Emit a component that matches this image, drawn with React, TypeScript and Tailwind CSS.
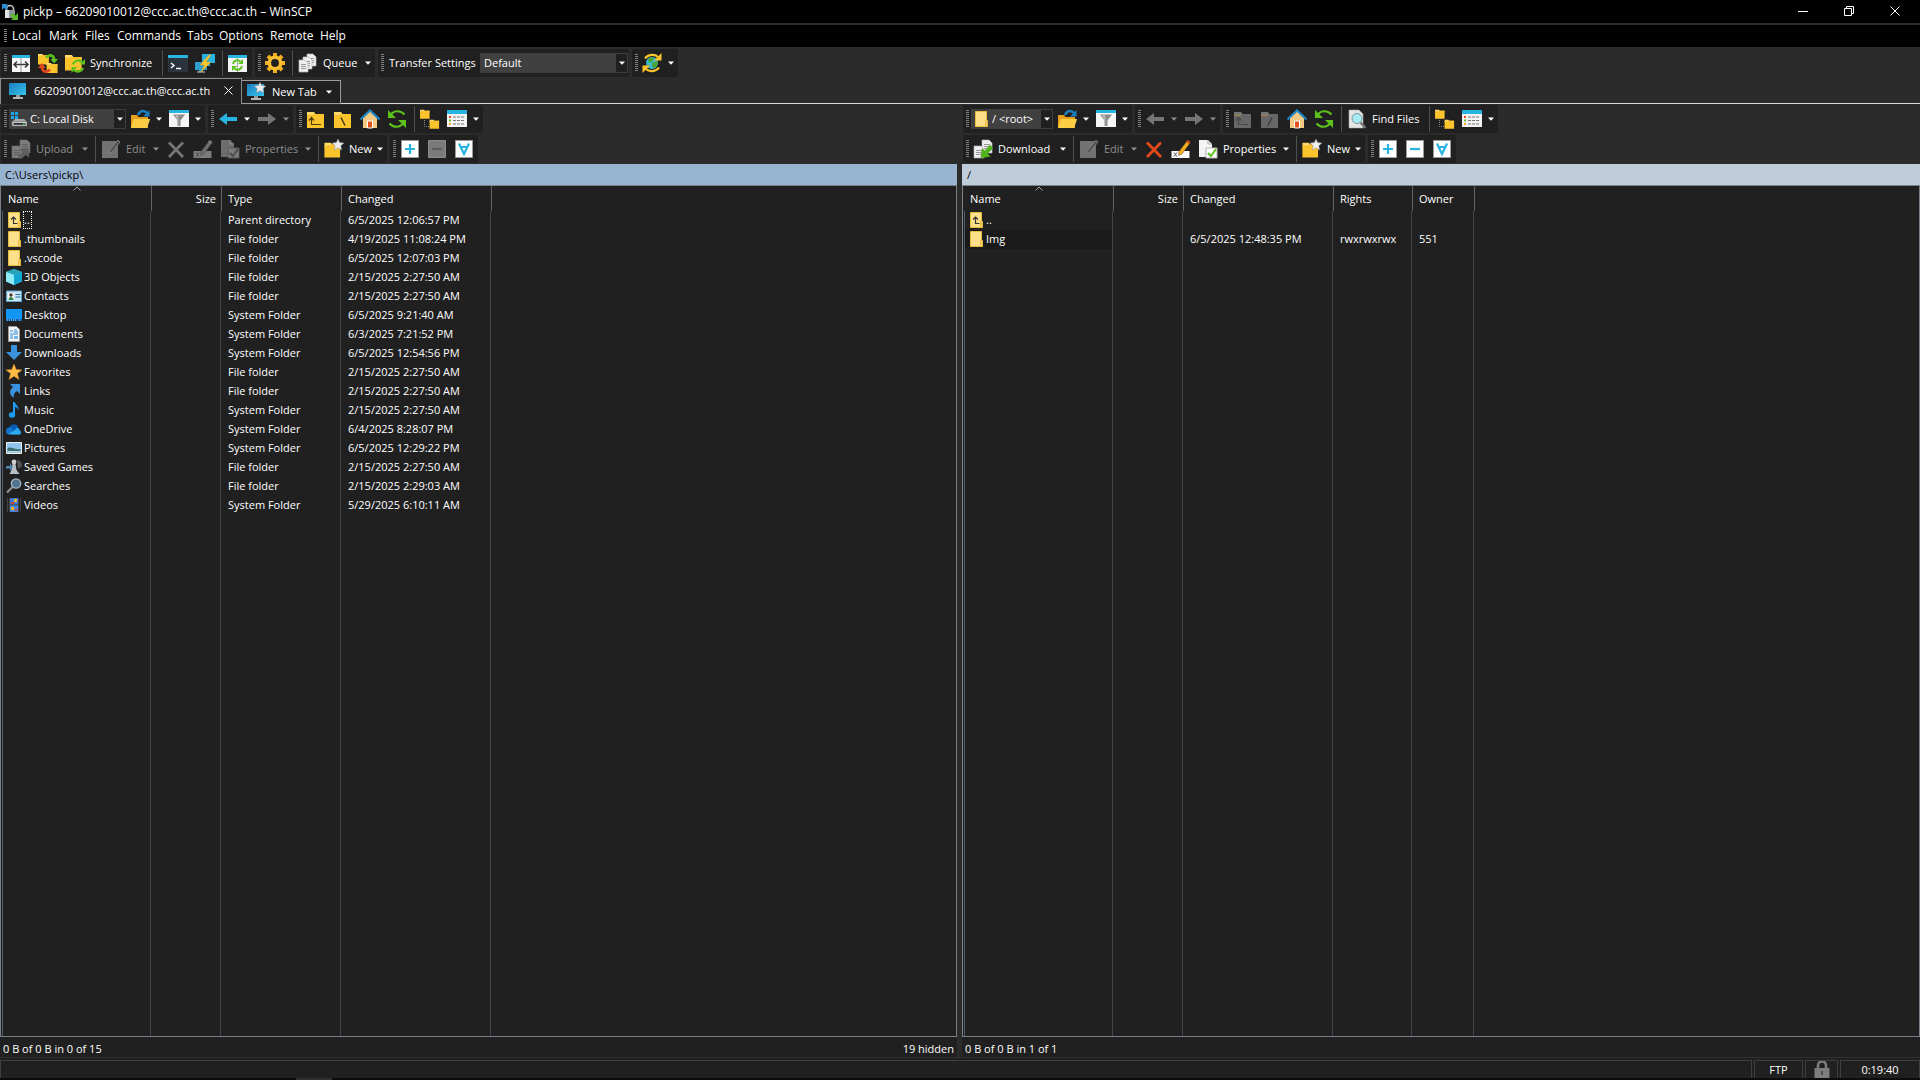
import React from "react";

type Kids = { children?: React.ReactNode };

const Ico = ({ children, box = "0 0 20 20", cls = "w-5 h-5" }: Kids & { box?: string; cls?: string }) => (
  <svg viewBox={box} className={`${cls} shrink-0`} fill="none" aria-hidden="true">
    {children}
  </svg>
);

const Caret = () => (
  <svg viewBox="0 0 6 4" className="h-1 w-1.5 shrink-0" aria-hidden="true">
    <path d="M0 .5h6L3 3.8z" fill="currentColor" />
  </svg>
);

/* ---------- toolbar icons ---------- */

const Y = "#fcc42c";
const Y2 = "#ffd968";
const G = "#5ec21c";
const C = "#27b4e0";

const FolderBase = ({ a = Y, b = Y2, t = "" }: { a?: string; b?: string; t?: string }) => (
  <g transform={t}>
    <path d="M1 3h7l1.500 2H18v3H1z" fill={b} />
    <path d="M1 6.500h6l1-1.500h10v14H1z" fill={a} />
    <path d="M1 6.500h6l1-1.500" stroke="#e9a51a" strokeOpacity=".6" strokeWidth=".8" />
  </g>
);

const Compare = () => (
  <Ico>
    <path d="M1 2h18v17H1z" fill="#f7f7f7" />
    <path d="M1 2h18v3H1z" fill={C} />
    <path d="M10 5v14" stroke="#777" strokeWidth=".8" />
    <path d="M3 11.500h14M6 8.500l-3 3 3 3M14 8.500l3 3-3 3" stroke="#3c3c3c" strokeWidth="1.600" />
  </Ico>
);

const SyncFolders = () => (
  <Ico>
    <FolderBase t="translate(-1 -1) scale(.66)" />
    <FolderBase t="translate(8 8) scale(.64)" />
    <path d="M8 4.500c4-4 8-2 8 2.500" stroke={G} strokeWidth="2.600" />
    <path d="M12.500 6H20l-4 4.500z" fill={G} />
    <path d="M12 16.500c-4 4-8 2-8-2.500" stroke="#e2481c" strokeWidth="2.600" />
    <path d="M0 15h7.500L3.800 10z" fill="#e2481c" />
  </Ico>
);

const SyncFolder = () => (
  <Ico>
    <FolderBase t="translate(-1 -1) scale(.98)" />
    <path d="M8 11.500a5.500 5.500 0 0 1 9-2.500" stroke={G} strokeWidth="2.300" />
    <path d="M20 6v5.500h-5.500z" fill={G} />
    <path d="M18 15a5.500 5.500 0 0 1-9 2" stroke={G} strokeWidth="2.300" />
    <path d="M6.500 20v-6H12z" fill={G} />
  </Ico>
);

const ConsoleIcon = () => (
  <Ico>
    <path d="M0 2h20v17H0z" fill="#2b333c" />
    <path d="M0 2h20v3H0z" fill={C} />
    <path d="M3 10l3 2.500L3 15M8 15.500h5" stroke="#fff" strokeWidth="1.400" />
  </Ico>
);

const Putty = () => (
  <Ico>
    <path d="M7 1h13v9H7zM12 10h3v3h-3z" fill={C} />
    <path d="M0 9h12v8H0zM4 17h4v2H4z" fill="#2f9fd0" />
    <path d="M2 19h8" stroke="#aaa" strokeWidth="1.300" />
    <path d="M14 2L5 12h4.500L6 19l10-10h-5l5-7z" fill="#ffc62e" stroke="#e39a12" strokeWidth=".5" />
  </Ico>
);

const RefreshSync = () => (
  <Ico>
    <path d="M0 2h19v17H0z" fill="#f5f5f5" />
    <path d="M0 2h19v3H0z" fill={C} />
    <path d="M9.500 5v14" stroke="#999" strokeWidth=".8" />
    <path d="M5 11a4.500 4.500 0 0 1 7.500-2.500M14 13a4.500 4.500 0 0 1-7.500 2.500" stroke={G} strokeWidth="1.900" />
    <path d="M15 6v5h-5zM4 18v-5h5z" fill={G} />
  </Ico>
);

const Gear = () => (
  <Ico>
    <g fill="#f2ae1c">
      <path d="M8 0h4v20H8z" />
      <path d="M8 0h4v20H8z" transform="rotate(45 10 10)" />
      <path d="M8 0h4v20H8z" transform="rotate(90 10 10)" />
      <path d="M8 0h4v20H8z" transform="rotate(135 10 10)" />
    </g>
    <circle cx="10" cy="10" r="5.700" fill="#202020" stroke="#f9bd30" strokeWidth="3.600" />
  </Ico>
);

const Page = ({ x, y, w = 9, h = 12, g = false }: { x: number; y: number; w?: number; h?: number; g?: boolean }) => (
  <g transform={`translate(${x} ${y})`}>
    <path d={`M0 0h${w - 3}l3 3v${h - 3}H0z`} fill={g ? "#7d7d7d" : "#efefef"} stroke={g ? "#686868" : "#b4b4b4"} strokeWidth=".7" />
    <path d={`M2 4.500h${w - 4}M2 6.500h${w - 4}M2 8.500h${w - 4}`} stroke={g ? "#5b5b5b" : "#8d8d8d"} strokeWidth=".9" />
  </g>
);

const QueueIcon = () => (
  <Ico>
    <Page x={9} y={1} />
    <Page x={5} y={4} />
    <Page x={1} y={7} />
  </Ico>
);

const Globe = () => (
  <Ico>
    <circle cx="10" cy="10" r="6" fill="#38b9e6" />
    <path d="M6 6l4-2 2 2-2 3-3 1zM10 10l5-2 1 3-3 4-3-1zM5 10l3 3-1 2z" fill="#4aa52e" />
    <path d="M3 5.500C6 1 13 1 16 4M17 14.500c-3 4.500-10 4.500-13 1.500" stroke={Y} strokeWidth="2.200" />
    <path d="M19.500 0v7.500H12zM.500 20v-7.500H8z" fill={Y} />
  </Ico>
);

const Monitor = ({ star = false }: { star?: boolean }) => (
  <Ico>
    <defs>
      <linearGradient id="scr" x1="0" y1="0" x2="1" y2="1">
        <stop offset="0" stopColor="#1c7fc0" />
        <stop offset="1" stopColor="#35c3ea" />
      </linearGradient>
    </defs>
    <path d="M1 2h17v12H1z" fill="url(#scr)" />
    <path d="M8 14h4v2H8z" fill="#999" />
    <path d="M5 17h10" stroke="#c8c8c8" strokeWidth="1.800" />
    {star && <path d="M14 0l1.600 3.600 4.400.4-3.200 2.700.9 4.300L14 8.800 10.300 11l.9-4.300L8 4l4.400-.4z" fill="#ececec" stroke="#777" strokeWidth=".4" />}
  </Ico>
);

const OpenFolder = () => (
  <Ico>
    <path d="M1 6h6l1.500 2H18v11H1z" fill="#e8a11c" />
    <path d="M4 10h16l-3 9H1z" fill={Y2} />
    <path d="M4 10h16l-3 9H1z" fill={Y} fillOpacity=".6" />
    <path d="M8 6c2-5 7-5 9-2" stroke="#1d7fbd" strokeWidth="2.400" />
    <path d="M19.500 1v6.500h-6.500z" fill="#1d7fbd" />
  </Ico>
);

const Filter = () => (
  <Ico>
    <path d="M0 1h20v17H0z" fill="#f6f6f6" />
    <path d="M0 1h20v3H0z" fill={C} />
    <path d="M4 5.500h12l-4.500 6V17h-3v-5.500z" fill="#8d8d8d" />
    <path d="M6 5.500h3l.5 5v6h-1v-5z" fill="#b9b9b9" />
  </Ico>
);

const ArrowIcon = ({ dir, c }: { dir: "l" | "r"; c: string }) => (
  <Ico>
    <path d={dir === "l" ? "M1 10l8-6v4h10v4H9v4z" : "M19 10l-8-6v4H1v4h10v4z"} fill={c} />
  </Ico>
);

const ParentFolder = ({ off = false }: { off?: boolean }) => (
  <Ico>
    <FolderBase a={off ? "#676767" : Y} b={off ? "#757575" : Y2} />
    <path d="M5.500 9v6.500H15M3 11.500l2.500-3 2.500 3" stroke={off ? "#4a4a4a" : "#4b3a10"} strokeWidth="1.200" />
  </Ico>
);

const RootFolder = ({ off = false }: { off?: boolean }) => (
  <Ico>
    <FolderBase a={off ? "#676767" : Y} b={off ? "#757575" : Y2} />
    <path d={off ? "M12 8.500l-4 8" : "M8 8.500l4 8"} stroke={off ? "#3d3d3d" : "#4b3a10"} strokeWidth="1.500" />
  </Ico>
);

const Home = () => (
  <Ico>
    <path d="M3 9l7-7 7 7v10H3z" fill="#f3c983" />
    <path d="M.500 10.500L10 1.500l9.500 9" stroke="#1f86c8" strokeWidth="2.200" />
    <path d="M7.500 12h5v7h-5z" fill="#e4521b" stroke="#fff" />
  </Ico>
);

const Refresh = () => (
  <Ico>
    <path d="M3.500 6.500C6 1.500 13 .5 17.500 5.500M16.500 13.500c-2.500 5-9.500 6-14 1" stroke={G} strokeWidth="2" />
    <path d="M1 1v8h8zM19 19v-8h-8z" fill={G} />
  </Ico>
);

const Tree = () => (
  <Ico>
    <FolderBase t="translate(-.500 -1) scale(.56)" />
    <FolderBase t="translate(9 9) scale(.56)" />
    <path d="M4.500 11v6.500H9" stroke="#8b8b8b" strokeDasharray="1 1" />
  </Ico>
);

const ListIcon = () => (
  <Ico>
    <path d="M0 1h20v17H0z" fill="#f3f3f3" />
    <path d="M0 1h20v4H0z" fill={C} />
    <path d="M2 7h2v2H2z" fill="#e2481c" />
    <path d="M2 10.500h2v2H2z" fill={G} />
    <path d="M2 14h2v2H2z" fill="#f7a91b" />
    <path d="M6 8h12M6 11.500h12M6 15h12" stroke="#777" strokeDasharray="3 1" />
  </Ico>
);

const Transfer = ({ down = false }: { down?: boolean }) => (
  <Ico>
    <Page x={9} y={1} w={10} h={13} g={!down} />
    <Page x={1} y={7} w={10} h={12} g={!down} />
    {down ? (
      <path d="M17 6l3 3-5.500 5.500 3 3L8 19l1-9.500 2.800 2.500z" fill="#51b51a" stroke="#2f8d0c" strokeWidth=".4" />
    ) : (
      <path d="M8 10h10v9l-3-3-5 4-3-3 5-4z" fill="#5f5f5f" />
    )}
  </Ico>
);

const EditIcon = () => (
  <Ico>
    <path d="M1 2h16v17H1z" fill="#727272" />
    <path d="M17 1l2 2-8 10-3 1 1-3z" fill="#525252" stroke="#848484" strokeWidth=".8" />
  </Ico>
);

const Cross = ({ c }: { c: string }) => (
  <Ico>
    <path d="M3 3.500L17 18M17 3.500L3 18" stroke={c} strokeWidth="2.800" />
  </Ico>
);

const Rename = ({ off = false }: { off?: boolean }) => (
  <Ico>
    <path d="M.500 12h18v7H.500z" fill={off ? "#7b7b7b" : "#fafafa"} />
    <path d="M3 13.500l3 4M6 13.500l-3 4" stroke="#444" strokeWidth=".9" />
    <path d="M16 2l3 2-8 11-3.500 1.500.5-4z" fill={off ? "#6e6e6e" : "#f7ae1e"} stroke="#3a3a3a" strokeWidth=".4" />
    <path d="M16.500 1l3 2-1.500 2-3-2z" fill={off ? "#7a7a7a" : "#d9531e"} />
  </Ico>
);

const Props = ({ off = false }: { off?: boolean }) => (
  <Ico>
    <path d="M1 1h9l4 4v13H1z" fill={off ? "#6d6d6d" : "#f4f4f4"} />
    <path d="M10 1v4h4" stroke="#999" strokeWidth=".8" />
    <path d="M8 9h11v10H8z" fill={off ? "#7b7b7b" : "#fff"} stroke={off ? "#5b5b5b" : "#b5b5b5"} />
    <path d="M10 14l3 3 5-7" stroke={off ? "#4d4d4d" : G} strokeWidth="2" />
  </Ico>
);

const NewIcon = () => (
  <Ico>
    <FolderBase t="translate(-.500 1) scale(.92)" />
    <path d="M14 0l1.700 3.600 4.300.4-3.200 2.800.9 4.200L14 8.900 10.300 11l.9-4.200L8 4l4.300-.4z" fill="#efefef" stroke="#8a8a8a" strokeWidth=".5" />
  </Ico>
);

const SelBox = ({ kind, off = false }: { kind: "plus" | "minus" | "inv"; off?: boolean }) => (
  <Ico>
    <path d="M1.500 1.500h17v17h-17z" fill={off ? "#7b7b7b" : "#fff"} stroke={off ? "#8c8c8c" : "#9c9c9c"} />
    {kind === "plus" && <path d="M10 5v10M5 10h10" stroke={C} strokeWidth="2.200" />}
    {kind === "minus" && <path d="M5 10h10" stroke={off ? "#5e5e5e" : C} strokeWidth="2.200" />}
    {kind === "inv" && <path d="M5 4.500l5 10.500 5-10.500M6.500 8h7" stroke={C} strokeWidth="2.200" />}
  </Ico>
);

const FindIcon = () => (
  <Ico>
    <path d="M2 1h10l4 4v14H2z" fill="#e6e6e6" stroke="#aaa" strokeWidth=".6" />
    <circle cx="10" cy="9.500" r="5" fill="#a7ebf5" stroke="#72979f" />
    <path d="M13.500 13.500l5 5.500" stroke="#777" strokeWidth="2.600" />
  </Ico>
);

const Drive = () => (
  <Ico cls="h-4 w-4" box="0 0 16 16">
    <path d="M0 1h3v3H0zM4 1h3v3H4zM0 5h3v3H0zM4 5h3v3H4z" fill="#19a9ea" />
    <path d="M4 8h9l3 3H1z" fill="#aaa" />
    <path d="M1 10.500h15V15H1z" fill="#d2d2d2" stroke="#666" strokeWidth=".6" />
    <path d="M2.500 12h12v1.700h-12z" fill="#222" />
    <path d="M12 12.200h1.500v1.200H12z" fill="#4ddb4d" />
  </Ico>
);

/* ---------- file icons, 16px ---------- */

const S = ({ children }: Kids) => (
  <Ico box="0 0 16 16" cls="h-4 w-4">
    {children}
  </Ico>
);

const FileFolder = ({ up = false }: { up?: boolean }) => (
  <S>
    <path d="M2.500.5h11v9h1v6H2.500z" fill="#ffe08a" stroke="#e6bd3c" />
    <path d="M12.500 9.500h2v6h-2z" fill="#f3cf62" stroke="#dfb232" strokeWidth=".6" />
    {up && <path d="M7.500 5v6.500h4M5 7.500L7.500 5 10 7.500" stroke="#333" strokeWidth="1.200" />}
  </S>
);

const fileIcons: Record<string, React.ReactNode> = {
  up: <FileFolder up />,
  folder: <FileFolder />,
  cube: (
    <S>
      <path d="M8 0l8 3v9.500L8 16 0 12.500V3z" fill="#38c6e0" />
      <path d="M8 0l8 3-8 3-8-3z" fill="#2ba3b8" />
      <path d="M0 3l8 3v10l-8-3.500z" fill="#8eeaf3" />
      <path d="M16 3L8 6v10l8-3.500z" fill="#12a5cf" />
    </S>
  ),
  contacts: (
    <S>
      <path d="M.500 3h15v10.500H.500z" fill="#c9e6f7" stroke="#5fa4cf" />
      <path d="M2 5h6v7H2z" fill="#f4f4f4" />
      <circle cx="5" cy="7" r="1.700" fill="#4a3a2c" />
      <path d="M2.500 12c0-4 5-4 5 0z" fill="#35854c" />
      <path d="M9.500 6.500h5M9.500 9h5" stroke="#2c6f9e" />
    </S>
  ),
  desktop: (
    <S>
      <path d="M0 2h16v12H0z" fill="#1296f3" />
      <path d="M0 12h16v2H0z" fill="#0a5ea8" />
      <path d="M1 13h10M13 13h2" stroke="#bfe2ff" strokeDasharray="1 1" />
    </S>
  ),
  docs: (
    <S>
      <path d="M2.500.5h8l3 3v12h-11z" fill="#f4f4f4" stroke="#9b9b9b" />
      <path d="M4 5h3M8 4h3M8 6h4M4 8h8M4 10h3M4 12h3" stroke="#2a8ad6" strokeWidth="1.100" />
      <path d="M8 10h4v3H8z" fill="#6fb9ee" />
    </S>
  ),
  down: (
    <S>
      <path d="M5 0h6v7h5l-8 8-8-8h5z" fill="#3b93e0" />
    </S>
  ),
  star: (
    <S>
      <path d="M8 0l2.200 5.600 5.800.3-4.600 3.700 1.600 5.900L8 12.200 3 15.500l1.600-5.900L0 5.900l5.800-.3z" fill="#ffbb45" stroke="#d98a1c" strokeWidth=".5" />
    </S>
  ),
  link: (
    <S>
      <path d="M4 1h10v10l-3-3c-3 2-4 4-3 7-5-3-5-8-1-11z" fill="#3b93e0" />
    </S>
  ),
  music: (
    <S>
      <path d="M7 0h2c0 3 5 4 3 9 0-3-1.500-4-3-4v8H7z" fill="#1c9bf0" />
      <ellipse cx="6" cy="13" rx="3.200" ry="2.700" fill="#1c9bf0" />
    </S>
  ),
  cloud: (
    <S>
      <path d="M3 9a5 5 0 0 1 9-3.500l-2 6z" fill="#0a5db5" />
      <circle cx="3.500" cy="10" r="3.500" fill="#1276d3" />
      <path d="M5 13.500l6-7a4 4 0 0 1 3 3 2.200 2.200 0 0 1-.5 4z" fill="#28a3ec" />
      <path d="M2 13.200l7-4 6 4z" fill="#2fb0f3" />
    </S>
  ),
  pics: (
    <S>
      <path d="M.500 2.500h15v11H.500z" fill="#8fc4ee" stroke="#eee" />
      <path d="M1.500 8c4-2 7 2 13 1v3.500h-13z" fill="#3d6f70" />
      <path d="M1.500 11h13v1.700h-13z" fill="#b6dbe6" />
    </S>
  ),
  games: (
    <S>
      <path d="M11 1c3 0 5 3 5 6l-4 3z" fill="#555" />
      <circle cx="8" cy="3" r="2.400" fill="#d0d0d0" />
      <path d="M6.500 5h3l1 6 3 4h-10l2-4z" fill="#b9c0c5" />
      <path d="M0 7h4V4l3 4-3 4v-2.500H0z" fill="#4f87b3" />
    </S>
  ),
  search: (
    <S>
      <circle cx="10" cy="5.500" r="4.700" fill="#54748e" stroke="#a7b5bf" strokeWidth="1.300" />
      <path d="M6.500 9L1 14.500" stroke="#8f9499" strokeWidth="2.200" />
    </S>
  ),
  video: (
    <S>
      <path d="M1 1h14v14H1z" fill="#444" />
      <path d="M2.500 1v14M13.500 1v14" stroke="#111" strokeDasharray="1.500 1" />
      <path d="M4 1h8v6.500H4z" fill="#3f75d8" />
      <path d="M4 8.500h8V15H4z" fill="#4a86e0" />
      <path d="M8 2h3v3H8zM5 10h3v3H5z" fill="#e9b52c" />
      <path d="M5 5h3v2H5zM9 12h2v2H9z" fill="#cf4432" />
    </S>
  ),
};

/* ---------- toolbar parts ---------- */

const Grip = () => (
  <span className="flex w-[7px] shrink-0 items-center pl-[3px]">
    <span className="h-[18px] w-[3px] bg-[repeating-linear-gradient(to_bottom,#7d7d7d_0_1px,transparent_1px_2px)]" />
  </span>
);

const Bar = ({ children, label }: Kids & { label: string }) => (
  <div role="toolbar" aria-label={label} className="flex h-7 items-stretch rounded-xs bg-[#202020]">
    <Grip />
    {children}
  </div>
);

const Sep = () => <span className="my-px ml-[3px] mr-0.5 w-px shrink-0 bg-[#4f4f4f]" />;

type BtnProps = { icon: React.ReactNode; name: string; text?: boolean; drop?: boolean; off?: boolean; w?: string };

const Btn = ({ icon, name, text = false, drop = false, off = false, w }: BtnProps) => (
  <button
    type="button"
    aria-label={name}
    disabled={off}
    className={`flex shrink-0 items-center whitespace-nowrap pl-[3px] ${w ?? (drop ? "w-[39px]" : "w-[27px]")} ${off ? "text-[#8f8f8f]" : "text-white"}`}
  >
    {icon}
    {text && <span className="ml-[5px]">{name}</span>}
    {drop && (
      <span className="ml-auto mr-1 flex">
        <Caret />
      </span>
    )}
  </button>
);

const Combo = ({ label, value, icon, w }: { label: string; value: string; icon?: React.ReactNode; w: string }) => (
  <div className={`mx-px my-1 flex shrink-0 items-stretch border border-[#3e3e3e] bg-[#404040] ${w}`}>
    {icon && <span className="flex items-center pl-px">{icon}</span>}
    <select aria-label={label} className="min-w-0 flex-1 appearance-none bg-transparent pl-[3px] text-white outline-none">
      <option>{value}</option>
    </select>
    <span className="pointer-events-none flex w-[11px] items-center justify-center bg-[#202020]">
      <Caret />
    </span>
  </div>
);

/* ---------- file lists ---------- */

type Col = { title: string; w: string; right?: boolean };
type Row = { icon: string; cells: string[]; focus?: boolean; shade?: boolean };

const FileTable = ({ cols, rows, label }: { cols: Col[]; rows: Row[]; label: string }) => (
  <div className="min-h-0 flex-1 border border-[#7b818a] bg-[#202020] pl-px">
    <table aria-label={label} className="h-full w-full table-fixed border-separate border-spacing-0 text-left">
      <thead>
        <tr className="h-[25px]">
          {cols.map((c, i) => (
            <th
              key={c.title}
              scope="col"
              className={`relative border-l p-0 font-normal ${c.w} ${i === 0 ? "border-transparent pl-[5px]" : "border-[#636363] pl-1.5"} ${c.right ? "pr-[5px] text-right" : ""}`}
            >
              {i === 0 && (
                <svg viewBox="0 0 8 5" className="absolute left-1/2 top-0 -ml-1 h-[5px] w-2" fill="none" aria-hidden="true">
                  <path d="M.500 4.500L4 1l3.500 3.500" stroke="#a0a0a0" />
                </svg>
              )}
              {c.title}
            </th>
          ))}
          <th className="border-l border-[#636363] p-0" />
        </tr>
      </thead>
      <tbody>
        {rows.map((r) => (
          <tr key={r.cells[0]} className="h-[19px]">
            {r.cells.map((c, i) => (
              <td
                key={cols[i].title}
                className={`overflow-visible whitespace-nowrap border-r border-[#41454b] p-0 pb-px leading-4 ${i === 0 ? "border-l border-l-[#4e5d70] pl-[3px]" : "pl-[7px]"} ${i === 0 && r.shade ? "bg-[#1a1a1a]" : ""}`}
              >
                {i === 0 ? (
                  <span className="flex items-center">
                    {fileIcons[r.icon]}
                    <span className={`ml-px border border-dotted pr-px ${r.focus ? "border-white" : "border-transparent"}`}>{c}</span>
                  </span>
                ) : (
                  c
                )}
              </td>
            ))}
            <td className="p-0" />
          </tr>
        ))}
        <tr>
          {cols.map((c, i) => (
            <td key={c.title} className={`border-r border-[#41454b] p-0 ${i === 0 ? "border-l border-l-[#4e5d70]" : ""}`} />
          ))}
          <td className="p-0" />
        </tr>
      </tbody>
    </table>
  </div>
);

const row = (icon: string, name: string, type: string, changed: string, focus = false): Row => ({
  icon,
  cells: [name, "", type, changed],
  focus,
});

const localRows: Row[] = [
  row("up", "..", "Parent directory", "6/5/2025 12:06:57 PM", true),
  row("folder", ".thumbnails", "File folder", "4/19/2025 11:08:24 PM"),
  row("folder", ".vscode", "File folder", "6/5/2025 12:07:03 PM"),
  row("cube", "3D Objects", "File folder", "2/15/2025 2:27:50 AM"),
  row("contacts", "Contacts", "File folder", "2/15/2025 2:27:50 AM"),
  row("desktop", "Desktop", "System Folder", "6/5/2025 9:21:40 AM"),
  row("docs", "Documents", "System Folder", "6/3/2025 7:21:52 PM"),
  row("down", "Downloads", "System Folder", "6/5/2025 12:54:56 PM"),
  row("star", "Favorites", "File folder", "2/15/2025 2:27:50 AM"),
  row("link", "Links", "File folder", "2/15/2025 2:27:50 AM"),
  row("music", "Music", "System Folder", "2/15/2025 2:27:50 AM"),
  row("cloud", "OneDrive", "System Folder", "6/4/2025 8:28:07 PM"),
  row("pics", "Pictures", "System Folder", "6/5/2025 12:29:22 PM"),
  row("games", "Saved Games", "File folder", "2/15/2025 2:27:50 AM"),
  row("search", "Searches", "File folder", "2/15/2025 2:29:03 AM"),
  row("video", "Videos", "System Folder", "5/29/2025 6:10:11 AM"),
];

const remoteRows: Row[] = [
  { icon: "up", cells: ["..", "", "", "", ""] },
  { icon: "folder", cells: ["Img", "", "6/5/2025 12:48:35 PM", "rwxrwxrwx", "551"], shade: true },
];

const localCols: Col[] = [
  { title: "Name", w: "w-[149px]" },
  { title: "Size", w: "w-[70px]", right: true },
  { title: "Type", w: "w-[120px]" },
  { title: "Changed", w: "w-[150px]" },
];

const remoteCols: Col[] = [
  { title: "Name", w: "w-[149px]" },
  { title: "Size", w: "w-[70px]", right: true },
  { title: "Changed", w: "w-[150px]" },
  { title: "Rights", w: "w-[79px]" },
  { title: "Owner", w: "w-[62px]" },
];

const Panel = ({ remote = false }: { remote?: boolean }) => {
  const off = !remote;
  return (
    <section aria-label={remote ? "Remote panel" : "Local panel"} className="flex min-w-0 flex-col">
      <div className="flex flex-col gap-0.5 py-px pl-px">
        <div className="flex gap-[3px]">
          <Bar label="Directory">
            <Combo
              label="Drive"
              value={remote ? "/ <root>" : "C: Local Disk"}
              icon={remote ? <FileFolder /> : <Drive />}
              w={remote ? "w-[82px]" : "w-[117px]"}
            />
            <Btn icon={<OpenFolder />} name="Open directory" drop />
            <Btn icon={<Filter />} name="Filter" drop />
          </Bar>
          <Bar label="History">
            <Btn icon={<ArrowIcon dir="l" c={remote ? "#757575" : C} />} name="Back" drop off={remote} />
            <Btn icon={<ArrowIcon dir="r" c="#757575" />} name="Forward" drop off />
          </Bar>
          <Bar label="Navigation">
            <Btn icon={<ParentFolder off={remote} />} name="Parent directory" off={remote} />
            <Btn icon={<RootFolder off={remote} />} name="Root directory" off={remote} />
            <Btn icon={<Home />} name="Home directory" />
            <Btn icon={<Refresh />} name="Refresh" />
            <Sep />
            {remote && (
              <>
                <Btn icon={<FindIcon />} name="Find Files" text w="w-[82px]" />
                <Sep />
              </>
            )}
            <Btn icon={<Tree />} name="Tree" />
            <Btn icon={<ListIcon />} name="View style" drop />
          </Bar>
        </div>
        <div className="flex gap-[3px]">
          <Bar label="Files">
            {remote ? (
              <Btn icon={<Transfer down />} name="Download" text drop w="w-[100px]" />
            ) : (
              <Btn icon={<Transfer />} name="Upload" text drop off w="w-[84px]" />
            )}
            <Sep />
            <Btn icon={<EditIcon />} name="Edit" text drop off w="w-[65px]" />
            <Btn icon={<Cross c={off ? "#757575" : "#e2481c"} />} name="Delete" off={off} />
            <Btn icon={<Rename off={off} />} name="Rename" off={off} />
            <Btn icon={<Props off={off} />} name="Properties" text drop off={off} w="w-[98px]" />
            <Sep />
            <Btn icon={<NewIcon />} name="New" text drop w="w-[66px]" />
          </Bar>
          <Bar label="Selection">
            <Btn icon={<SelBox kind="plus" />} name="Select files" />
            <Btn icon={<SelBox kind="minus" off={off} />} name="Unselect files" off={off} />
            <Btn icon={<SelBox kind="inv" />} name="Invert selection" />
          </Bar>
        </div>
      </div>
      <div className={`flex h-[21px] items-center pl-[5px] text-black ${remote ? "bg-[#bfcddb]" : "bg-[#99b4d1]"}`}>
        {remote ? "/" : "C:\\Users\\pickp\\"}
      </div>
      <FileTable
        label={remote ? "Remote files" : "Local files"}
        cols={remote ? remoteCols : localCols}
        rows={remote ? remoteRows : localRows}
      />
      <div className="flex h-5 items-center justify-between bg-[#202020] px-[3px] pt-[3px]">
        <span>{remote ? "0 B of 0 B in 1 of 1" : "0 B of 0 B in 0 of 15"}</span>
        {!remote && <span>19 hidden</span>}
      </div>
    </section>
  );
};

const menus: [string, string][] = [
  ["Local", "w-[37px]"],
  ["Mark", "w-9"],
  ["Files", "w-8"],
  ["Commands", "w-[70px]"],
  ["Tabs", "w-8"],
  ["Options", "w-[51px]"],
  ["Remote", "w-[50px]"],
  ["Help", "w-9"],
];

export default function App() {
  return (
    <div className="flex h-screen flex-col overflow-hidden bg-[#2b2b2b] font-['Open_Sans','Noto_Sans',sans-serif] text-[11px] leading-4 text-white">
      <header className="flex h-[23px] shrink-0 items-center bg-black px-0.5">
        <svg viewBox="0 0 16 16" className="h-4 w-4" fill="none" aria-hidden="true">
          <path d="M4.500 7V5a3.500 3.500 0 0 1 7 0v2" stroke="#c3c8cc" strokeWidth="1.600" />
          <path d="M3 6h10v8H3z" fill="#8e969c" />
          <path d="M3 6h4v8H3z" fill="#dfe3e6" />
          <path d="M0 6V0h6L4.500 1.500 6 4 4 5.500 1.800 4z" fill="#2a8fd0" />
          <path d="M16 9v7h-7l2-2-2.500-3L11 9l2.500 2.500z" fill="#55b92a" />
        </svg>
        <h1 className="ml-[5px] text-xs">pickp – 66209010012@ccc.ac.th@ccc.ac.th – WinSCP</h1>
        <div className="ml-auto flex self-stretch pb-0.5">
          <button type="button" aria-label="Minimize" className="flex w-[46px] items-center justify-center">
            <svg viewBox="0 0 10 10" className="h-2.5 w-2.5" fill="none"><path d="M0 5.500h10" stroke="#fff" /></svg>
          </button>
          <button type="button" aria-label="Restore" className="flex w-[46px] items-center justify-center">
            <svg viewBox="0 0 10 10" className="h-2.5 w-2.5" fill="none"><path d="M.500 2.500h7v7h-7zM2.500 2.500v-2h7v7h-2" stroke="#fff" /></svg>
          </button>
          <button type="button" aria-label="Close" className="flex w-[46px] items-center justify-center">
            <svg viewBox="0 0 10 10" className="h-2.5 w-2.5" fill="none"><path d="M.500.5l9 9M9.500.5l-9 9" stroke="#fff" /></svg>
          </button>
        </div>
      </header>

      <nav aria-label="Main menu" className="mt-0.5 flex h-[22px] shrink-0 items-stretch bg-black pl-px text-xs">
        <span className="flex w-[11px] items-center pl-[3px]">
          <span className="h-3.5 w-[3px] bg-[repeating-linear-gradient(to_bottom,#7d7d7d_0_1px,transparent_1px_2px)]" />
        </span>
        {menus.map(([m, w]) => (
          <button key={m} type="button" className={`whitespace-nowrap text-left ${w}`}>
            {m}
          </button>
        ))}
      </nav>

      <div className="mt-0.5 flex shrink-0 gap-[3px] pl-px">
        <Bar label="Synchronization">
          <Btn icon={<Compare />} name="Compare directories" />
          <Btn icon={<SyncFolders />} name="Keep remote directory up to date" />
          <Btn icon={<SyncFolder />} name="Synchronize" text w="w-[97px]" />
          <Sep />
          <Btn icon={<ConsoleIcon />} name="Console" />
          <Btn icon={<Putty />} name="Open in PuTTY" />
          <Sep />
          <Btn icon={<RefreshSync />} name="Synchronize browsing" />
        </Bar>
        <Bar label="Queue">
          <Btn icon={<Gear />} name="Preferences" />
          <Sep />
          <Btn icon={<QueueIcon />} name="Queue" text drop w="w-20" />
        </Bar>
        <Bar label="Transfer">
          <span className="ml-1 flex w-[90px] items-center whitespace-nowrap">Transfer Settings</span>
          <Combo label="Transfer Settings" value="Default" w="w-[148px]" />
        </Bar>
        <Bar label="Reconnect">
          <Btn icon={<Globe />} name="Reconnect" drop />
        </Bar>
      </div>

      <div className="flex h-[27px] shrink-0 items-end" role="tablist">
        <div className="flex h-[26px] w-[242px] items-center border border-b-0 border-[#8c8c8c] bg-[#202020] pb-0.5 pl-[7px]">
          <button type="button" role="tab" aria-selected="true" className="flex flex-1 items-center whitespace-nowrap">
            <Monitor />
            <span className="ml-1.5">66209010012@ccc.ac.th@ccc.ac.th</span>
          </button>
          <button type="button" aria-label="Close tab" className="mr-2 flex">
            <svg viewBox="0 0 9 9" className="h-[9px] w-[9px]" fill="none"><path d="M.500.5l8 8M8.500.5l-8 8" stroke="#fff" /></svg>
          </button>
        </div>
        <button type="button" role="tab" aria-selected="false" className="flex h-6 w-[99px] items-center border border-l-0 border-[#9c9c9c] bg-[#202020] pl-1">
          <Monitor star />
          <span className="ml-1.5">New Tab</span>
          <span className="ml-auto mr-2 flex"><Caret /></span>
        </button>
        <div className="flex-1 border-b border-[#d8d8d8]" />
      </div>

      <main className="grid min-h-0 flex-1 grid-cols-[957fr_958fr] gap-x-[5px]">
        <Panel />
        <Panel remote />
      </main>

      <footer className="flex shrink-0 flex-col border-t border-[#2e2e2e] bg-[#202020] pt-0.5">
        <div className="flex h-[18px] items-stretch gap-0.5">
          <div className="flex-1 border border-b-0 border-[#3f3f3f]" />
          <div className="flex w-[49px] items-center justify-center border border-b-0 border-[#3f3f3f]">FTP</div>
          <div className="flex w-[33px] items-end justify-center overflow-hidden border border-b-0 border-[#3f3f3f]">
            <svg viewBox="0 0 16 18" className="h-[18px] w-4" fill="none" role="img" aria-label="Encrypted">
              <path d="M4 9V5.500a4 4 0 0 1 8 0V9" stroke="#7d7d7d" strokeWidth="2.600" />
              <path d="M.500 8h15v10H.500z" fill="#7d7d7d" />
              <path d="M8 11v4" stroke="#4e4e4e" strokeWidth="2" />
            </svg>
          </div>
          <div className="flex w-20 items-center justify-center border border-b-0 border-[#3f3f3f]">0:19:40</div>
        </div>
        <div className="h-0.5 bg-[#0c0c0c] pl-[296px]">
          <div className="h-0.5 w-9 bg-[#2f2f2f]" />
        </div>
      </footer>
    </div>
  );
}
